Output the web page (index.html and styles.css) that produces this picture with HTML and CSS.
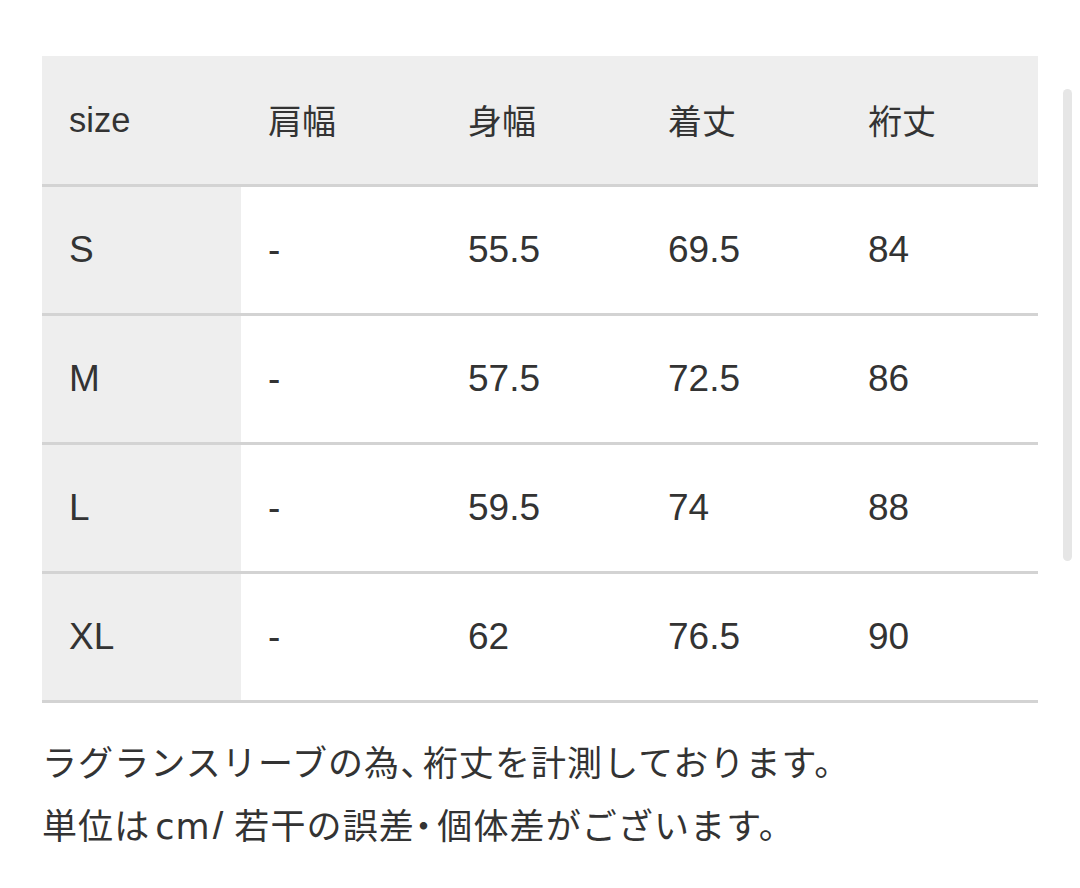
FILE: index.html
```html
<!DOCTYPE html>
<html lang="ja">
<head>
<meta charset="utf-8">
<link rel="stylesheet" href="styles.css">
</head>
<body>
<div class="page">
  <table class="size-table">
    <colgroup>
      <col class="c1"><col class="c2"><col class="c3"><col class="c4"><col class="c5">
    </colgroup>
    <thead>
      <tr><th class="lat-s">size</th><th>肩幅</th><th>身幅</th><th>着丈</th><th>裄丈</th></tr>
    </thead>
    <tbody>
      <tr><th class="lat">S</th><td class="lat">-</td><td class="lat">55.5</td><td class="lat">69.5</td><td class="lat">84</td></tr>
      <tr><th class="lat">M</th><td class="lat">-</td><td class="lat">57.5</td><td class="lat">72.5</td><td class="lat">86</td></tr>
      <tr><th class="lat">L</th><td class="lat">-</td><td class="lat">59.5</td><td class="lat">74</td><td class="lat">88</td></tr>
      <tr><th class="lat">XL</th><td class="lat">-</td><td class="lat">62</td><td class="lat">76.5</td><td class="lat">90</td></tr>
    </tbody>
  </table>
  <div class="notes">
    <p>ラグランスリーブの為<span class="punct">、</span>裄丈を計測しております。</p>
    <p>単位は<span class="unit">cm</span><span class="slash">/</span>若干の誤差<span class="punct">・</span>個体差がございます。</p>
  </div>
</div>
<div class="scrollbar"></div>
</body>
</html>
```
FILE: styles.css
```css
html, body {
  margin: 0;
  padding: 0;
  background: #ffffff;
}
body {
  font-family: "Noto Sans CJK JP", "Noto Sans", sans-serif;
  color: #333333;
  width: 1080px;
  height: 888px;
  overflow: hidden;
}
.page {
  padding: 56px 42px 0 42px;
}
.size-table {
  width: 996px;
  border-collapse: collapse;
  table-layout: fixed;
  font-size: 34px;
}
.c1 { width: 199px; }
.c2 { width: 200px; }
.c3 { width: 200px; }
.c4 { width: 200px; }
.size-table th,
.size-table td {
  height: 129px;
  padding: 0 0 0 27px;
  text-align: left;
  font-weight: normal;
  vertical-align: middle;
  border-bottom: 3px solid #d3d3d3;
  box-sizing: border-box;
  line-height: 1;
}
.size-table .lat {
  font-family: "Liberation Sans", Arial, sans-serif;
  font-size: 37px;
}
.size-table .lat-s {
  font-family: "Liberation Sans", Arial, sans-serif;
  font-size: 34.5px;
}
.size-table thead th {
  background: #eeeeee;
}
.size-table tbody th {
  background: #eeeeee;
}
.size-table tbody td {
  background: #ffffff;
}
.notes {
  margin-top: 26px;
  font-size: 35px;
  line-height: 63px;
  letter-spacing: 1.1px;
}
.notes p {
  margin: 0;
  white-space: nowrap;
}
.punct {
  font-feature-settings: "halt";
  letter-spacing: 5px;
}
.unit {
  font-family: "DejaVu Sans", sans-serif;
  font-size: 35px;
  letter-spacing: 1px;
  margin-left: 5px;
}
.slash {
  font-family: "Liberation Sans", Arial, sans-serif;
  font-size: 38px;
  margin-left: 2px;
  margin-right: 10px;
}
.scrollbar {
  position: absolute;
  left: 1063px;
  top: 89px;
  width: 9px;
  height: 472px;
  border-radius: 5px;
  background: #e6e6e6;
}
```
